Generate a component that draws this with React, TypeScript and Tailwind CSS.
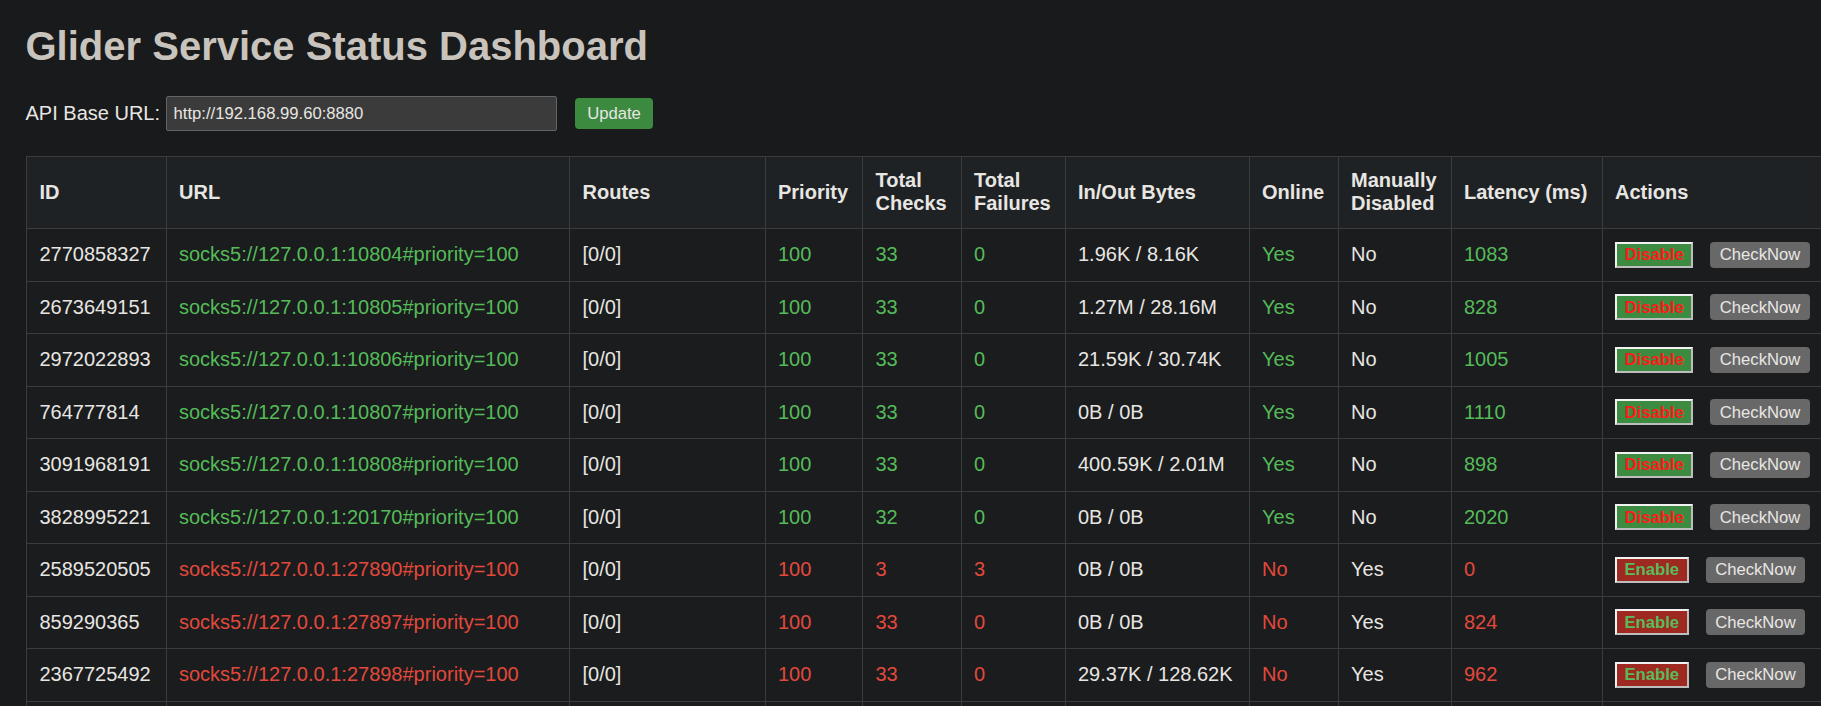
import React from "react";

type Row = {
  id: string;
  port: string;
  checks: string;
  failures: string;
  bytes: string;
  latency: string;
  ok: boolean;
};

const rows: Row[] = [
  { id: "2770858327", port: "10804", checks: "33", failures: "0", bytes: "1.96K / 8.16K", latency: "1083", ok: true },
  { id: "2673649151", port: "10805", checks: "33", failures: "0", bytes: "1.27M / 28.16M", latency: "828", ok: true },
  { id: "2972022893", port: "10806", checks: "33", failures: "0", bytes: "21.59K / 30.74K", latency: "1005", ok: true },
  { id: "764777814", port: "10807", checks: "33", failures: "0", bytes: "0B / 0B", latency: "1110", ok: true },
  { id: "3091968191", port: "10808", checks: "33", failures: "0", bytes: "400.59K / 2.01M", latency: "898", ok: true },
  { id: "3828995221", port: "20170", checks: "32", failures: "0", bytes: "0B / 0B", latency: "2020", ok: true },
  { id: "2589520505", port: "27890", checks: "3", failures: "3", bytes: "0B / 0B", latency: "0", ok: false },
  { id: "859290365", port: "27897", checks: "33", failures: "0", bytes: "0B / 0B", latency: "824", ok: false },
  { id: "2367725492", port: "27898", checks: "33", failures: "0", bytes: "29.37K / 128.62K", latency: "962", ok: false },
];

const headers = [
  "ID",
  "URL",
  "Routes",
  "Priority",
  "Total Checks",
  "Total Failures",
  "In/Out Bytes",
  "Online",
  "Manually Disabled",
  "Latency (ms)",
  "Actions",
];

const widths = [139.5, 403.5, 195.5, 97.5, 98.5, 104, 184, 89, 113, 151, 221];

const td = "border border-[#393d40] px-[12.5px] py-0 align-middle whitespace-nowrap";

export default function App() {
  return (
    <div
      className="w-[1821px] min-h-[706px] overflow-hidden bg-[#181a1b] pl-[25.5px] text-[#e8e6e3]"
      style={{ fontFamily: '"Liberation Sans", Arial, Helvetica, sans-serif' }}
    >
      <h1 className="pt-[23px] text-[40px] font-bold leading-[46px] text-[#c8c3bc]">
        Glider Service Status Dashboard
      </h1>
      <div className="mt-[27px] flex h-[35px] items-center">
        <label className="text-[20px] leading-[23px]">API Base URL:</label>
        <input
          readOnly
          value="http://192.168.99.60:8880"
          className="ml-[5.5px] h-[35px] w-[391px] rounded-[2px] border border-[#5f6568] bg-[#3b3b3b] px-[7px] text-[16.67px] text-[#e8e6e3] outline-none"
        />
        <button className="ml-[18.5px] h-[31px] w-[78px] rounded-[4px] bg-[#3b8a3f] text-[16.67px] text-[#e8e6e3]">
          Update
        </button>
      </div>
      <table
        className="mt-[24.5px] ml-[0.5px] table-fixed border-collapse text-[20px] leading-[23px]"
        style={{ width: 1797 }}
      >
        <colgroup>
          {widths.map((w, i) => (
            <col key={i} style={{ width: w }} />
          ))}
        </colgroup>
        <thead>
          <tr className="h-[72.5px] bg-[#1f2224]">
            {headers.map((h) => (
              <th
                key={h}
                className="border border-[#393d40] px-[12.5px] py-0 text-left align-middle font-bold text-[#e8e6e3]"
              >
                {h}
              </th>
            ))}
          </tr>
        </thead>
        <tbody>
          {rows.map((r) => {
            const c = r.ok ? "text-[#55bb59]" : "text-[#e2493c]";
            return (
              <tr key={r.id} className="h-[52.5px] bg-[#1a1c1d]">
                <td className={td}>{r.id}</td>
                <td className={`${td} ${c}`}>{`socks5://127.0.0.1:${r.port}#priority=100`}</td>
                <td className={td}>[0/0]</td>
                <td className={`${td} ${c}`}>100</td>
                <td className={`${td} ${c}`}>{r.checks}</td>
                <td className={`${td} ${c}`}>{r.failures}</td>
                <td className={td}>{r.bytes}</td>
                <td className={`${td} ${c}`}>{r.ok ? "Yes" : "No"}</td>
                <td className={td}>{r.ok ? "No" : "Yes"}</td>
                <td className={`${td} ${c}`}>{r.latency}</td>
                <td className={td}>
                  <div className="flex items-center">
                    {r.ok ? (
                      <button className="h-[26px] border-[2.5px] border-t-[#f2f2f2] border-l-[#f2f2f2] border-r-[#bdbdbd] border-b-[#bdbdbd] bg-[#3d8b40] px-[7.5px] text-[16.67px] font-bold leading-[19px] text-[#ff1a1a]">
                        Disable
                      </button>
                    ) : (
                      <button className="h-[26px] border-[2.5px] border-t-[#f2f2f2] border-l-[#f2f2f2] border-r-[#bdbdbd] border-b-[#bdbdbd] bg-[#9d2920] px-[7.5px] text-[16.67px] font-bold leading-[19px] text-[#58bc5c]">
                        Enable
                      </button>
                    )}
                    <button className="ml-[17px] h-[26px] rounded-[4px] bg-[#686868] px-[9.5px] text-[16.67px] leading-[19px] text-[#e8e6e3]">
                      CheckNow
                    </button>
                  </div>
                </td>
              </tr>
            );
          })}
          <tr className="h-[52.5px] bg-[#1a1c1d]">
            {widths.map((_, i) => (
              <td key={i} className={td}></td>
            ))}
          </tr>
        </tbody>
      </table>
    </div>
  );
}
